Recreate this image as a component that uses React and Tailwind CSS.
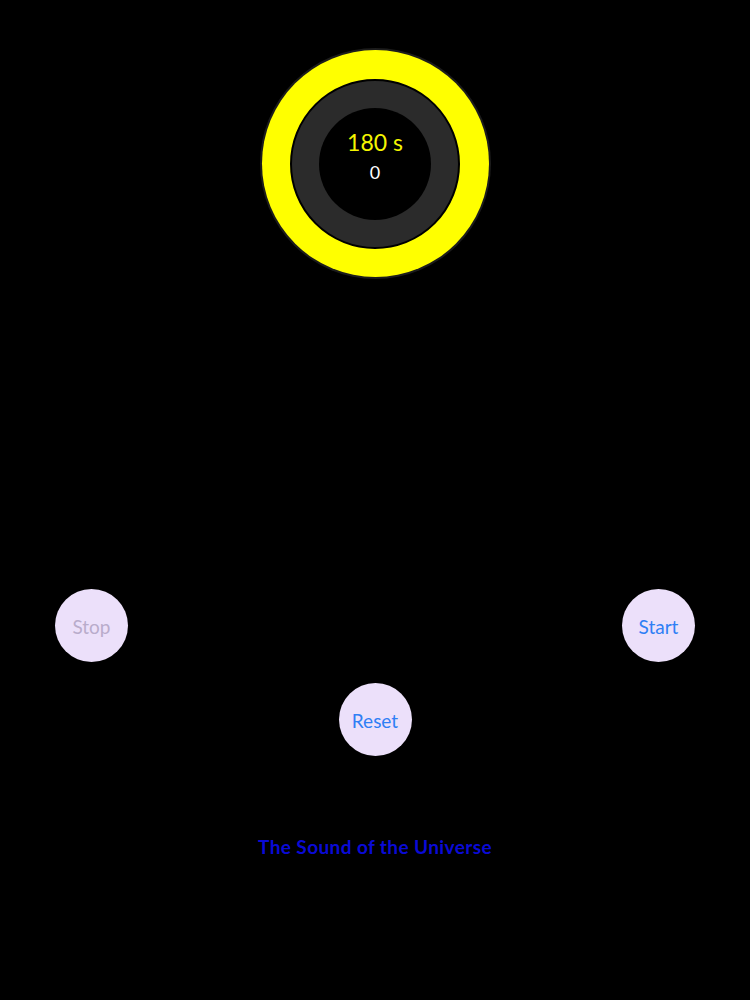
export default function App() {
    const font = { fontFamily: 'Lato, "Open Sans", sans-serif' };

    return (
        <div className="w-[750px] h-[1000px] bg-black flex flex-col items-center" style={font}>
            {/* timer ring */}
            <div className="mt-[48px] w-[231px] h-[231px] rounded-full bg-[#1c1c1c] p-[2px]">
                <div className="w-full h-full rounded-full bg-[#ffff00] flex items-center justify-center">
                    <div className="w-[170px] h-[170px] rounded-full border-2 border-black bg-[#2b2b2b] flex items-center justify-center">
                        <div className="w-[112px] h-[112px] rounded-full bg-black flex flex-col items-center justify-center pb-[16px]">
                            <span className="text-[23px] leading-[26px] text-[#f5f500]">180 s</span>
                            <span className="text-[18px] leading-[22px] text-white mt-[6px]">0</span>
                        </div>
                    </div>
                </div>
            </div>

            {/* controls */}
            <div className="w-full mt-[310px] px-[55px] flex justify-between">
                <button className="w-[73px] h-[73px] rounded-full bg-[#ece0fa] text-[19px] pt-[3px] text-[#b9accb]">Stop</button>
                <button className="w-[73px] h-[73px] rounded-full bg-[#ece0fa] text-[19px] pt-[3px] text-[#2f7ff5]">Start</button>
            </div>
            <button className="mt-[21px] w-[73px] h-[73px] rounded-full bg-[#ece0fa] text-[19px] pt-[3px] text-[#2f7ff5]">Reset</button>

            <p className="mt-[77px] text-[19px] tracking-[0.4px] font-bold text-[#0a0ad6]">The Sound of the Universe</p>
        </div>
    );
}
